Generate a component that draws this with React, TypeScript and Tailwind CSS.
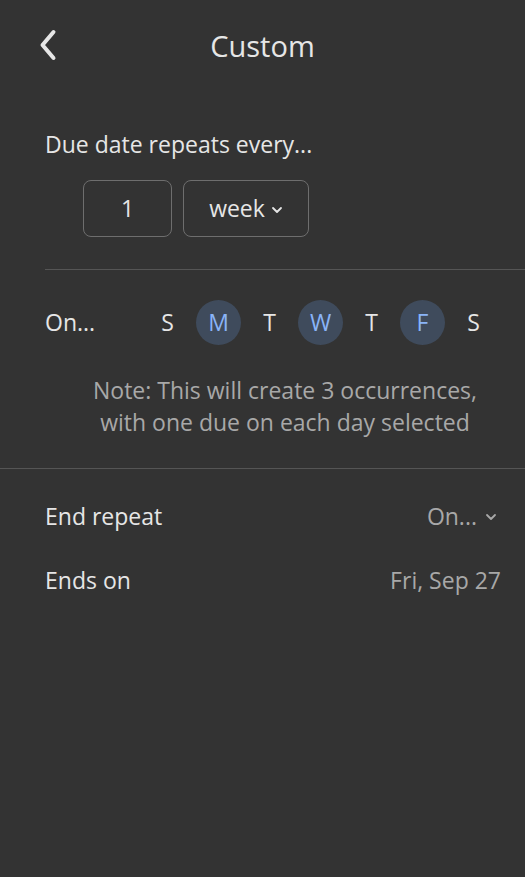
import React from "react";

const days = [
  { l: "S", on: false },
  { l: "M", on: true },
  { l: "T", on: false },
  { l: "W", on: true },
  { l: "T", on: false },
  { l: "F", on: true },
  { l: "S", on: false },
];

function Chevron({ className }: { className?: string }) {
  return (
    <svg viewBox="0 0 12 8" className={className} fill="none" stroke="currentColor" strokeWidth="1.8" strokeLinecap="round" strokeLinejoin="round">
      <path d="M2 2l4 4 4-4" />
    </svg>
  );
}

export default function App() {
  return (
    <div className="w-[525px] h-[877px] bg-[#333333] text-[#e6e6e6] overflow-hidden" style={{ fontFamily: "'Open Sans', Lato, sans-serif" }}>
      {/* Header */}
      <div className="relative h-[90px] flex items-center justify-center">
        <svg viewBox="0 0 20 32" className="absolute left-[38px] top-[29px] w-[21px] h-[32px]" fill="none" stroke="#e6e6e6" strokeWidth="4" strokeLinecap="round" strokeLinejoin="round">
          <path d="M15 3L4 16l11 13" />
        </svg>
        <span className="text-[29px] leading-none">Custom</span>
      </div>

      <div className="pl-[45px]">
        <div className="text-[23px] leading-none pt-[43px]">Due date repeats every...</div>
        <div className="flex gap-[11px] pl-[38px] mt-[24px]">
          <div className="w-[89px] h-[57px] rounded-[8px] border border-[#6e6e6e] flex items-center justify-center text-[23px]">1</div>
          <div className="w-[126px] h-[57px] rounded-[8px] border border-[#6e6e6e] flex items-center justify-center gap-[6px] text-[23px]">
            <span>week</span>
            <Chevron className="w-[12px] h-[8px] mt-[2px]" />
          </div>
        </div>
        <div className="h-px bg-[#555555] mt-[32px]" />
        <div className="flex items-center h-[105px]">
          <span className="text-[23px] w-[100px]">On...</span>
          <div className="flex gap-[6px]">
            {days.map((d, i) => (
              <div
                key={i}
                className={
                  "w-[45px] h-[45px] rounded-full flex items-center justify-center text-[23px] " +
                  (d.on ? "bg-[#3f4b5c] text-[#8ab4f8]" : "")
                }
              >
                {d.l}
              </div>
            ))}
          </div>
        </div>
      </div>
      <div className="text-center text-[23px] leading-[32px] text-[#a8a8a8] pl-[45px] -mt-[1px]">
        Note: This will create 3 occurrences,
        <br />
        with one due on each day selected
      </div>
      <div className="h-px bg-[#555555] mt-[30px]" />
      <div className="pl-[45px] pr-[24px]">
        <div className="flex items-center justify-between h-[64px] mt-[15px]">
          <span className="text-[23px]">End repeat</span>
          <span className="flex items-center gap-[8px] text-[23px] text-[#a8a8a8] pr-[4px]">
            On...
            <Chevron className="w-[12px] h-[8px] mt-[2px]" />
          </span>
        </div>
        <div className="flex items-center justify-between h-[64px]">
          <span className="text-[23px]">Ends on</span>
          <span className="text-[23px] text-[#a8a8a8]">Fri, Sep 27</span>
        </div>
      </div>
    </div>
  );
}
